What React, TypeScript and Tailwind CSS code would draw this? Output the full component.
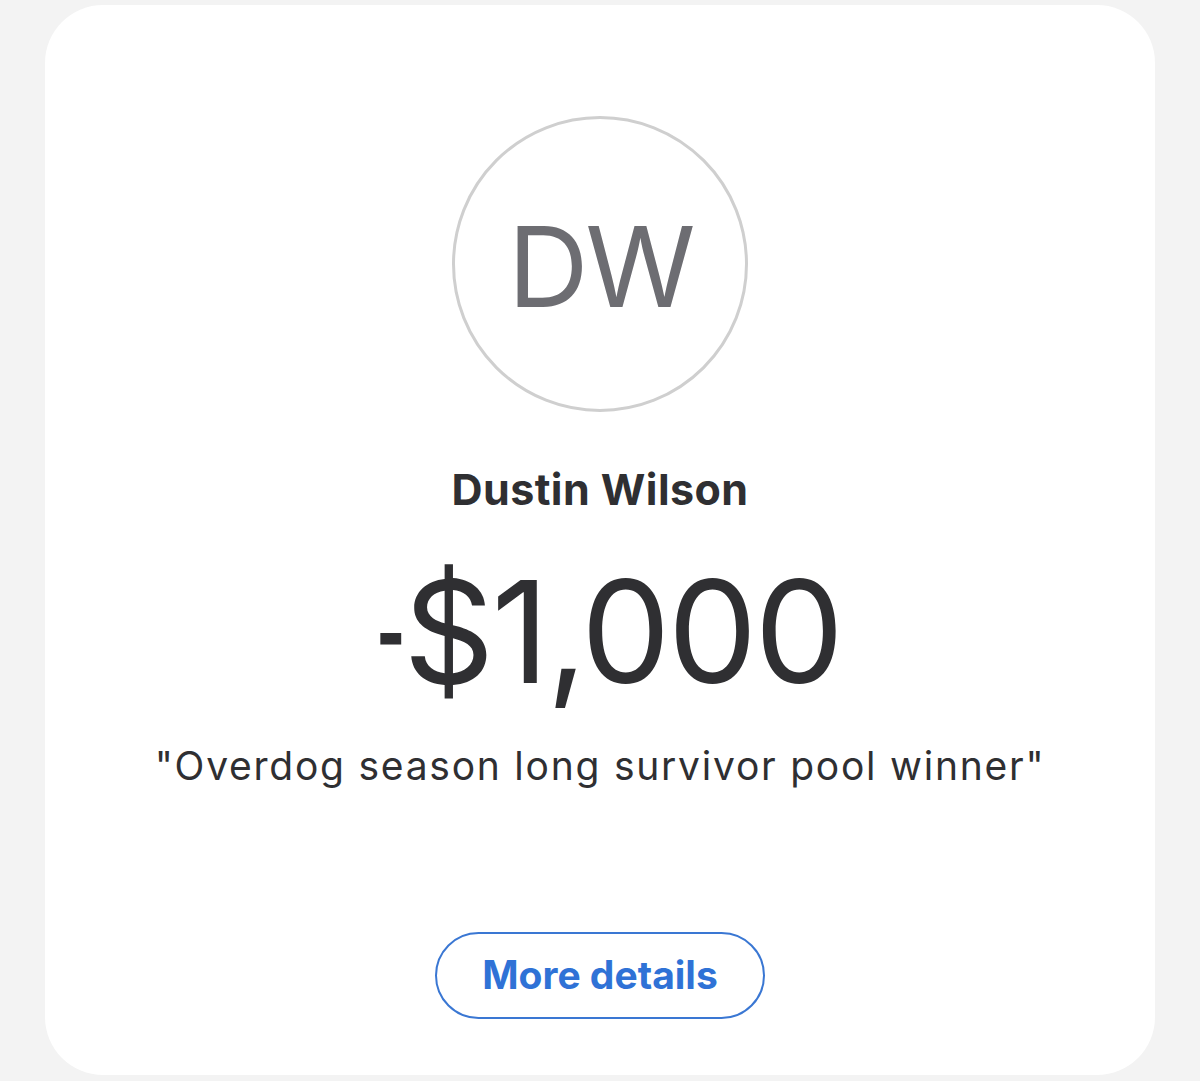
export default function App() {
  return (
    <div
      className="flex h-[1081px] w-[1200px] flex-col bg-[#f3f3f3] pl-[45px] pr-[45px] pt-[5px] pb-[6px]"
      style={{ fontFamily: "Inter, 'Liberation Sans', sans-serif" }}
    >
      <div className="flex flex-1 flex-col items-center rounded-[58px] bg-white">
        <div className="mt-[111px] flex h-[296px] w-[296px] items-center justify-center rounded-full border-[3px] border-[#cfcfcf]">
          <span className="mt-[4px] text-[112px] leading-none tracking-[-0.03em] text-[#6d6d72]">DW</span>
        </div>
        <div className="mt-[56px] text-[43px] font-bold leading-none tracking-[0.01em] text-[#2f2f32]">
          Dustin Wilson
        </div>
        <div className="mt-[49px] text-[142px] leading-none tracking-[-0.02em] text-[#2f2f32]">
          <span className="-mr-[18px] inline-block origin-center scale-x-[0.46]">-</span>
          $1,000
        </div>
        <div className="mt-[44px] text-[39px] leading-none tracking-[0.045em] text-[#2f2f32]">
          "Overdog season long survivor pool winner"
        </div>
        <button className="mt-[147px] flex h-[87px] w-[330px] items-center justify-center rounded-full border-2 border-[#3a77d3] text-[39px] font-bold text-[#2f72d6]">
          More details
        </button>
      </div>
    </div>
  );
}
